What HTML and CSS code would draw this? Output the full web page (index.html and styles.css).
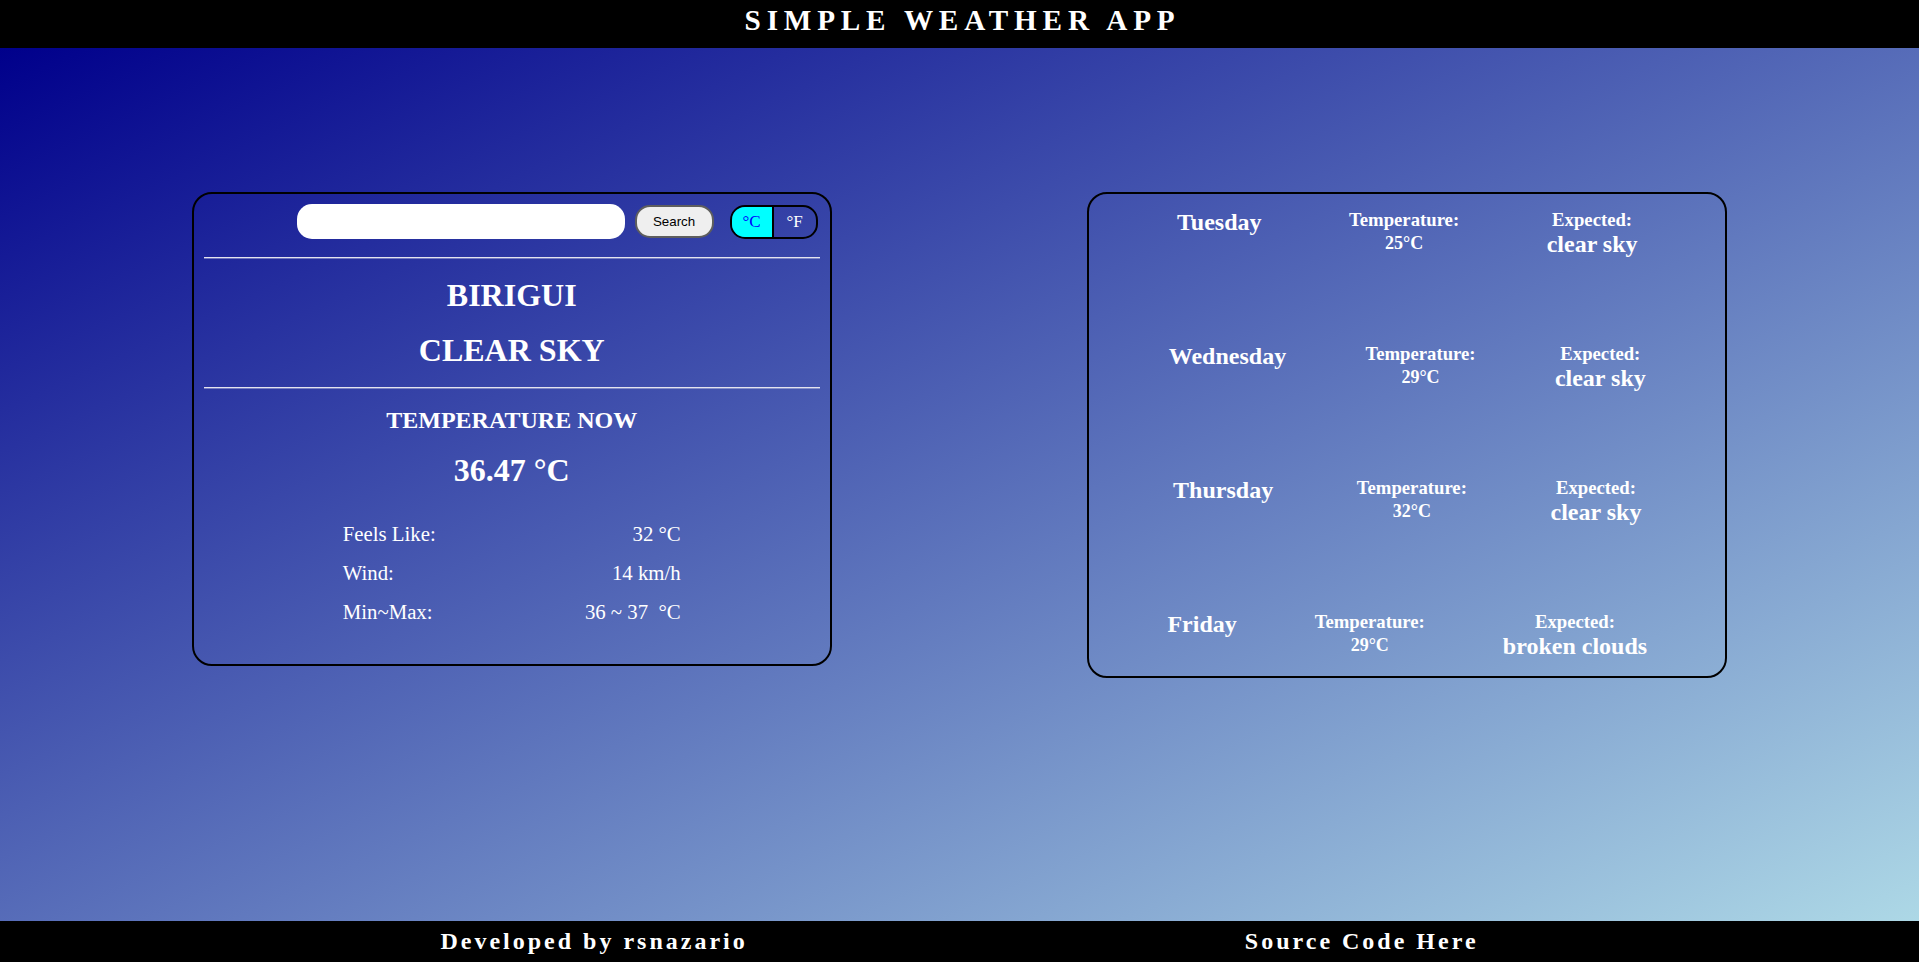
FILE: index.html
```html
<!DOCTYPE html>
<html lang="en">
<head>
<meta charset="utf-8">
<title>Simple Weather App</title>
<link rel="stylesheet" href="styles.css">
</head>
<body>
<header class="topbar">
  <h1 class="app-title">SIMPLE WEATHER APP</h1>
</header>
<main class="stage">
  <section class="card current">
    <div class="search-row">
      <input class="search-input" type="text" aria-label="City">
      <button class="search-btn" type="button">Search</button>
      <div class="unit-toggle">
        <button class="unit active" type="button">°C</button>
        <button class="unit" type="button">°F</button>
      </div>
    </div>
    <div class="rule"></div>
    <h2 class="big-line">BIRIGUI</h2>
    <h2 class="big-line">CLEAR SKY</h2>
    <div class="rule"></div>
    <h3 class="sub-title">TEMPERATURE NOW</h3>
    <p class="big-line">36.47 °C</p>
    <div class="details">
      <span>Feels Like:</span><span class="val">32 °C</span>
      <span>Wind:</span><span class="val">14 km/h</span>
      <span>Min~Max:</span><span class="val">36 ~ 37&nbsp; °C</span>
    </div>
  </section>

  <section class="card forecast">
    <div class="day-row">
      <div class="day-name">Tuesday</div>
      <div class="day-col"><div class="lbl">Temperature:</div><div class="temp">25°C</div></div>
      <div class="day-col"><div class="lbl">Expected:</div><div class="desc">clear sky</div></div>
    </div>
    <div class="day-row">
      <div class="day-name">Wednesday</div>
      <div class="day-col"><div class="lbl">Temperature:</div><div class="temp">29°C</div></div>
      <div class="day-col"><div class="lbl">Expected:</div><div class="desc">clear sky</div></div>
    </div>
    <div class="day-row">
      <div class="day-name">Thursday</div>
      <div class="day-col"><div class="lbl">Temperature:</div><div class="temp">32°C</div></div>
      <div class="day-col"><div class="lbl">Expected:</div><div class="desc">clear sky</div></div>
    </div>
    <div class="day-row">
      <div class="day-name">Friday</div>
      <div class="day-col"><div class="lbl">Temperature:</div><div class="temp">29°C</div></div>
      <div class="day-col"><div class="lbl">Expected:</div><div class="desc">broken clouds</div></div>
    </div>
  </section>
</main>
<footer class="bottombar">
  <span class="foot-item">Developed by rsnazario</span>
  <a class="foot-item" href="#">Source Code Here</a>
</footer>
</body>
</html>
```

FILE: styles.css
```css
* { box-sizing: border-box; }

html, body {
  margin: 0;
  height: 100%;
}

body {
  display: flex;
  flex-direction: column;
  height: 100vh;
  overflow: hidden;
  background: #000;
  color: #fff;
  font-family: "Liberation Serif", "Times New Roman", serif;
}

/* Header */
.topbar {
  flex: none;
  height: 48px;
  background: #000;
  text-align: center;
  padding-top: 4px;
}

.app-title {
  margin: 0;
  padding-left: 6px;
  font-size: 29.2px;
  line-height: 32px;
  font-weight: bold;
  letter-spacing: 5.8px;
  color: #fff;
}

/* Main area */
.stage {
  flex: 1;
  display: flex;
  justify-content: space-between;
  align-items: flex-start;
  padding: 144px 10% 0;
  background: linear-gradient(to bottom right, #00008b, #add8e6);
}

.card {
  width: 33.3333vw;
  border: 2px solid #000;
  border-radius: 20px;
}

/* Current weather card */
.current {
  display: flex;
  flex-direction: column;
  gap: 18px;
  padding: 10px;
}

.search-row {
  display: flex;
  justify-content: flex-end;
  align-items: center;
  height: 35px;
  padding-right: 2px;
}

.search-input {
  width: 328px;
  height: 35px;
  margin: 0 10px 0 0;
  padding: 0 14px;
  border: none;
  border-radius: 15px;
  background: #fff;
  outline: none;
}

.search-btn {
  width: 79px;
  height: 33px;
  margin: 0 16px 0 0;
  padding: 0;
  border: 2px solid #5e5e5e;
  border-radius: 15px;
  background: #efefef;
  color: #000;
  font-family: "Liberation Sans", Arial, sans-serif;
  font-size: 13.33px;
}

.unit-toggle {
  display: flex;
  width: 88px;
  height: 34px;
  border: 2px solid #000;
  border-radius: 15px;
  overflow: hidden;
}

.unit {
  width: 42px;
  height: 100%;
  margin: 0;
  padding: 0;
  border: none;
  background: transparent;
  color: #fff;
  font-family: "Liberation Serif", "Times New Roman", serif;
  font-size: 17px;
}

.unit.active {
  background: #00ffff;
  color: #0000ff;
  border-right: 2px solid #000;
}

.rule {
  height: 2px;
  border-top: 1px solid #e4e4ee;
  border-bottom: 1px solid rgba(255, 255, 255, 0.35);
}

.big-line {
  margin: 0;
  font-size: 32px;
  line-height: 36.8px;
  font-weight: bold;
  text-align: center;
}

.sub-title {
  margin: 0;
  font-size: 24px;
  line-height: 27.6px;
  font-weight: bold;
  text-align: center;
}

.details {
  align-self: center;
  width: 338px;
  margin: 15.5px 0 30px;
  display: grid;
  grid-template-columns: 1fr auto;
  row-gap: 14.8px;
  font-size: 20.8px;
  line-height: 23.9px;
}

.details .val {
  text-align: right;
}

/* Forecast card */
.forecast {
  display: flex;
  flex-direction: column;
  gap: 86px;
  padding: 14px 0 18px;
}

.day-row {
  display: flex;
  justify-content: space-evenly;
  align-items: flex-start;
  text-align: center;
  font-weight: bold;
}

.day-name {
  font-size: 24px;
  line-height: 28px;
}

.day-col {
  margin-top: 2px;
}

.lbl {
  font-size: 18.72px;
  line-height: 20px;
}

.temp {
  margin-top: 2.6px;
  font-size: 18px;
  line-height: 20px;
}

.desc {
  margin-top: 1.5px;
  font-size: 24px;
  line-height: 24.5px;
}

/* Footer */
.bottombar {
  flex: none;
  height: 41px;
  display: flex;
  justify-content: space-around;
  align-items: center;
  padding: 0 10%;
  background: #000;
  font-size: 24px;
  font-weight: bold;
  letter-spacing: 3px;
}

.foot-item {
  color: #fff;
  text-decoration: none;
}
```
